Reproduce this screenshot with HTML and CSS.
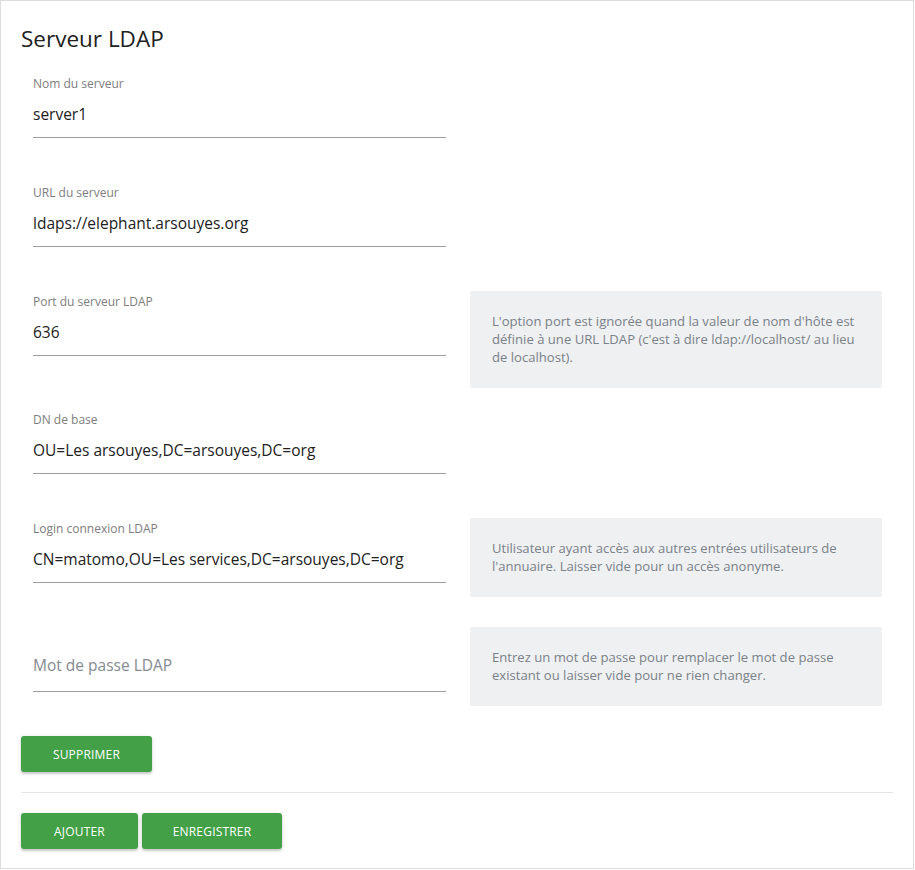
FILE: index.html
```html
<!DOCTYPE html>
<html lang="fr">
<head>
<meta charset="utf-8">
<title>Serveur LDAP</title>
<link rel="stylesheet" href="styles.css">
</head>
<body>
<div class="card">
  <h2 class="title">Serveur LDAP</h2>

  <div class="row">
    <div class="field">
      <div class="label">Nom du serveur</div>
      <div class="value">server1</div>
    </div>
  </div>

  <div class="row">
    <div class="field">
      <div class="label">URL du serveur</div>
      <div class="value">ldaps://elephant.arsouyes.org</div>
    </div>
  </div>

  <div class="row">
    <div class="field">
      <div class="label">Port du serveur LDAP</div>
      <div class="value">636</div>
    </div>
    <div class="help">L'option port est ignorée quand la valeur de nom d'hôte est définie à une URL LDAP (c'est à dire ldap://localhost/ au lieu de localhost).</div>
  </div>

  <div class="row">
    <div class="field">
      <div class="label">DN de base</div>
      <div class="value">OU=Les arsouyes,DC=arsouyes,DC=org</div>
    </div>
  </div>

  <div class="row">
    <div class="field">
      <div class="label">Login connexion LDAP</div>
      <div class="value">CN=matomo,OU=Les services,DC=arsouyes,DC=org</div>
    </div>
    <div class="help">Utilisateur ayant accès aux autres entrées utilisateurs de l'annuaire. Laisser vide pour un accès anonyme.</div>
  </div>

  <div class="row">
    <div class="field">
      <div class="label"></div>
      <div class="value placeholder">Mot de passe LDAP</div>
    </div>
    <div class="help">Entrez un mot de passe pour remplacer le mot de passe existant ou laisser vide pour ne rien changer.</div>
  </div>

  <div class="actions first">
    <button class="btn btn-delete">Supprimer</button>
  </div>
  <div class="divider"></div>
  <div class="actions">
    <button class="btn btn-add">Ajouter</button>
    <button class="btn btn-save">Enregistrer</button>
  </div>
</div>
</body>
</html>
```

FILE: styles.css
```css
html, body {
  margin: 0;
  padding: 0;
  background: #ffffff;
}

body {
  font-family: "Open Sans", "Noto Sans", "Liberation Sans", sans-serif;
  color: #212121;
}

.card {
  box-sizing: border-box;
  width: 914px;
  height: 869px;
  border: 1px solid #dcdcdc;
  padding: 23px 20px 0 20px;
  background: #fff;
}

.title {
  margin: 0 0 19px 0;
  font-size: 22.5px;
  line-height: 30px;
  font-weight: 400;
  color: #212121;
}

.row {
  display: flex;
  align-items: flex-start;
  gap: 24px;
  padding-left: 12px;
}

.field {
  width: 413px;
  padding-top: 3px;
  margin-bottom: 44px;
  flex: none;
}

.label {
  height: 16px;
  font-size: 12px;
  line-height: 16px;
  color: #7d7d7d;
  margin-bottom: 11px;
}

.value {
  font-size: 15.5px;
  line-height: 22px;
  height: 22px;
  padding-bottom: 12px;
  border-bottom: 1px solid #9e9e9e;
  color: #212121;
  white-space: nowrap;
}

.value.placeholder {
  color: #858a90;
  line-height: 16px;
  height: 22px;
}

.help {
  box-sizing: border-box;
  width: 412px;
  flex: none;
  background: #eef0f2;
  padding: 21px 22px 22px 22px;
  margin-bottom: 21px;
  font-size: 13.1px;
  line-height: 18px;
  color: #7b8188;
  border-radius: 2px;
}

.actions {
  display: flex;
  gap: 4px;
}

.btn {
  height: 36px;
  padding: 0;
  border: none;
  border-radius: 3px;
  background: #43a047;
  color: #ffffff;
  font-family: "Open Sans", "Noto Sans", "Liberation Sans", sans-serif;
  font-size: 12px;
  letter-spacing: 0.2px;
  text-transform: uppercase;
  box-shadow: 0 2px 2px 0 rgba(0,0,0,0.14), 0 1px 5px 0 rgba(0,0,0,0.12);
  cursor: pointer;
}

.btn-delete { width: 131px; }
.btn-add { width: 117px; }
.btn-save { width: 140px; }

.divider {
  height: 1px;
  background: #e6e6e6;
  margin: 20px 0 20px 0;
}
```
